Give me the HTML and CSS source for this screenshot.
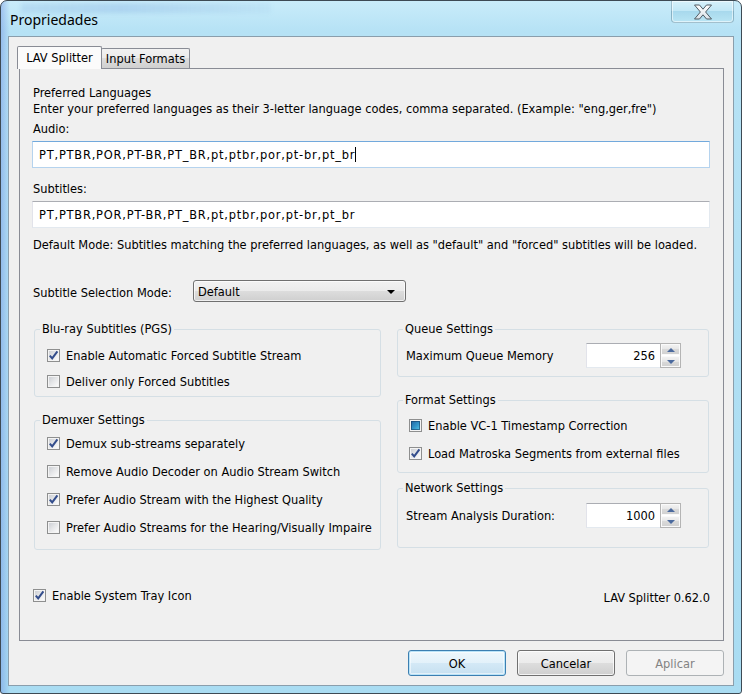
FILE: index.html
```html
<!DOCTYPE html>
<html lang="pt">
<head>
<meta charset="UTF-8">
<title>Propriedades</title>
<link rel="stylesheet" href="styles.css">
</head>
<body>
<div class="window">
    <div class="titlebar">
        <!-- brilho da janela de tras, visto atraves do vidro -->
        <div class="glow"></div>
        <span class="title">Propriedades</span>
        <div class="close">
            <svg width="20" height="16" viewBox="0 0 20 16">
                <defs>
                    <linearGradient id="xg" x1="0" y1="0" x2="0" y2="1">
                        <stop offset="0" stop-color="#ffffff"/>
                        <stop offset="1" stop-color="#d9e2e8"/>
                    </linearGradient>
                </defs>
                <polygon points="1.5,1 6.5,1 10,5.2 13.5,1 18.5,1 12.6,8 18.5,15 13.5,15 10,10.8 6.5,15 1.5,15 7.4,8" fill="url(#xg)" stroke="#4f5b63" stroke-width="1" stroke-linejoin="round"/>
            </svg>
        </div>
    </div>

    <div class="client">
        <div class="tabs">
            <div class="tab active">LAV Splitter</div>
            <div class="tab">Input Formats</div>
        </div>

        <div class="panel">
            <p>Preferred Languages</p>
            <p>Enter your preferred languages as their 3-letter language codes, comma separated. (Example: "eng,ger,fre")</p>
            <p class="field-label">Audio:</p>
            <div class="textbox focused">PT,PTBR,POR,PT-BR,PT_BR,pt,ptbr,por,pt-br,pt_br<span class="caret"></span></div>
            <p class="field-label gap">Subtitles:</p>
            <div class="textbox">PT,PTBR,POR,PT-BR,PT_BR,pt,ptbr,por,pt-br,pt_br</div>
            <p class="note">Default Mode: Subtitles matching the preferred languages, as well as "default" and "forced" subtitles will be loaded.</p>

            <div class="mode-row">
                <span class="mode-label">Subtitle Selection Mode:</span>
                <div class="select"><span>Default</span><span class="arrow"></span></div>
            </div>

            <div class="columns">
                <div class="col-left">
                    <fieldset class="group">
                        <legend>Blu-ray Subtitles (PGS)</legend>
                        <div class="group-body pgs">
                            <div class="check-row"><span class="cb checked"></span>Enable Automatic Forced Subtitle Stream</div>
                            <div class="check-row"><span class="cb"></span>Deliver only Forced Subtitles</div>
                        </div>
                    </fieldset>
                    <fieldset class="group demux">
                        <legend>Demuxer Settings</legend>
                        <div class="group-body">
                            <div class="check-row"><span class="cb checked"></span>Demux sub-streams separately</div>
                            <div class="check-row"><span class="cb"></span>Remove Audio Decoder on Audio Stream Switch</div>
                            <div class="check-row"><span class="cb checked"></span>Prefer Audio Stream with the Highest Quality</div>
                            <div class="check-row"><span class="cb"></span>Prefer Audio Streams for the Hearing/Visually Impaire</div>
                        </div>
                    </fieldset>
                </div>

                <div class="col-right">
                    <fieldset class="group">
                        <legend>Queue Settings</legend>
                        <div class="group-body queue">
                            <div class="field-row">
                                <span class="field-name">Maximum Queue Memory</span>
                                <div class="spin">
                                    <div class="spin-input">256</div>
                                    <div class="spin-btns"><span class="up"></span><span class="down"></span></div>
                                </div>
                            </div>
                        </div>
                    </fieldset>
                    <fieldset class="group format">
                        <legend>Format Settings</legend>
                        <div class="group-body formats">
                            <div class="check-row"><span class="cb mixed"></span>Enable VC-1 Timestamp Correction</div>
                            <div class="check-row"><span class="cb checked"></span>Load Matroska Segments from external files</div>
                        </div>
                    </fieldset>
                    <fieldset class="group network">
                        <legend>Network Settings</legend>
                        <div class="group-body net">
                            <div class="field-row">
                                <span class="field-name">Stream Analysis Duration:</span>
                                <div class="spin">
                                    <div class="spin-input">1000</div>
                                    <div class="spin-btns"><span class="up"></span><span class="down"></span></div>
                                </div>
                            </div>
                        </div>
                    </fieldset>
                </div>
            </div>

            <div class="footer">
                <div class="check-row"><span class="cb checked"></span>Enable System Tray Icon</div>
                <span class="version">LAV Splitter 0.62.0</span>
            </div>
        </div>

        <div class="buttons">
            <button class="btn default">OK</button>
            <button class="btn">Cancelar</button>
            <button class="btn" disabled>Aplicar</button>
        </div>
    </div>
</div>
</body>
</html>
```

FILE: styles.css
```css
body {
    margin: 0;
    font-family: "DejaVu Sans Condensed", "DejaVu Sans", sans-serif;
    font-size: 12.7px;
    color: #000;
    background: #fff;
}
p {
    margin: 0;
    line-height: 16px;
}

/* moldura aero */
.window {
    width: 742px;
    height: 694px;
    box-sizing: border-box;
    border: 1px solid #3d4a54;
    border-radius: 7px 7px 3px 3px;
    background: linear-gradient(90deg, rgba(90, 120, 220, 0.35) 0, rgba(90, 120, 220, 0) 9px),
                linear-gradient(180deg, #c9ecfa 0%, #b6e2f5 30px, #a9dcf2 100%);
    display: flex;
    flex-direction: column;
    overflow: hidden;
}
.titlebar {
    height: 35px;
    display: flex;
    justify-content: space-between;
    align-items: flex-start;
    position: relative;
}
.glow {
    position: absolute;
    top: 2px;
    left: 20px;
    width: 250px;
    height: 10px;
    background: linear-gradient(90deg, rgba(70, 120, 200, 0.12), rgba(70, 120, 200, 0.18) 40%, rgba(70, 120, 200, 0.05));
    filter: blur(2px);
}
.title {
    position: relative;
    margin: 9px 0 0 9px;
    font-family: "Noto Sans", sans-serif;
    font-size: 14px;
    line-height: 20px;
}
.close {
    width: 63px;
    height: 22px;
    margin-right: 7px;
    box-sizing: border-box;
    border: 1px solid rgba(70, 100, 120, 0.35);
    border-top: none;
    border-radius: 0 0 4px 4px;
    background: linear-gradient(180deg, #d6f1fb 0%, #c0e7f6 50%, #a8d9ed 50%, #b9e5f4 100%);
    box-shadow: inset 0 0 0 1px rgba(255, 255, 255, 0.55);
    display: flex;
    align-items: center;
    justify-content: center;
    position: relative;
}

.client {
    margin: 0 7px;
    height: 650px;
    box-sizing: border-box;
    border: 1px solid #8a9eac;
    background: #f0f0f0;
    display: flex;
    flex-direction: column;
}

/* abas */
.tabs {
    display: flex;
    align-items: flex-end;
    height: 22px;
    margin: 9px 0 0 8px;
}
.tab {
    height: 20px;
    width: 89px;
    box-sizing: border-box;
    border: 1px solid #898c95;
    border-bottom: none;
    margin-left: -1px;
    background: linear-gradient(180deg, #f2f2f2 0%, #ebebeb 50%, #dddddd 50%, #cfcfcf 100%);
    text-align: center;
    line-height: 19px;
    border-radius: 2px 2px 0 0;
}
.tab.active {
    height: 23px;
    width: 85px;
    margin-left: 0;
    margin-bottom: -1px;
    background: #fbfbfb;
    line-height: 21px;
    position: relative;
    z-index: 1;
}

.panel {
    margin-left: 10px;
    width: 705px;
    height: 573px;
    box-sizing: border-box;
    border: 1px solid #898c95;
    background: #f0f0f0;
    padding: 16px 13px 0;
    display: flex;
    flex-direction: column;
}
.field-label {
    margin-top: 4px;
}
.field-label.gap {
    margin-top: 13px;
}
.textbox {
    margin: 4px 0 0 -1px;
    width: 678px;
    height: 27px;
    box-sizing: border-box;
    border: 1px solid;
    border-color: #abadb3 #e3e9ef #e3e9ef #e2e3ea;
    background: #fff;
    padding: 0 6px;
    line-height: 25px;
    letter-spacing: 0.8px;
    white-space: nowrap;
}
.textbox.focused {
    border-color: #72a9dc #b5d3ee #b5d3ee #b5d3ee;
}
.caret {
    display: inline-block;
    width: 1px;
    height: 15px;
    background: #000;
    vertical-align: -3px;
}
.note {
    margin-top: 9px;
}

.mode-row {
    display: flex;
    align-items: center;
    margin-top: 27px;
}
.mode-label {
    width: 160px;
    padding-top: 4px;
    line-height: 16px;
}
.select {
    width: 213px;
    height: 22px;
    box-sizing: border-box;
    border: 1px solid #707070;
    border-radius: 3px;
    background: linear-gradient(180deg, #f2f2f2 0%, #ebebeb 50%, #dddddd 50%, #cfcfcf 100%);
    box-shadow: inset 0 0 0 1px rgba(255, 255, 255, 0.7);
    padding: 0 10px 0 4px;
    line-height: 19px;
    display: flex;
    justify-content: space-between;
    align-items: center;
}
.arrow {
    width: 0;
    height: 0;
    border-left: 4px solid transparent;
    border-right: 4px solid transparent;
    border-top: 4px solid #000;
    margin-top: 1px;
}

/* grupos */
.columns {
    display: flex;
    gap: 16px;
    margin: 19px 0 0 1px;
}
.col-left {
    width: 347px;
}
.col-right {
    width: 312px;
}
.group {
    margin: 0;
    padding: 0;
    border: 1px solid #d5dfe5;
    border-radius: 3px;
    min-width: 0;
}
.group legend {
    padding: 0 2px;
    margin-left: 5px;
    line-height: 16px;
}
.group-body {
    display: flex;
    flex-direction: column;
    gap: 8px;
    padding: 5px 0 12px 12px;
}
.group-body.pgs {
    gap: 6px;
    padding: 8px 0 5px 12px;
}
.demux, .format {
    margin-top: 15px;
}
.network {
    margin-top: 7px;
}
.group-body.queue {
    padding: 6px 0 8px 8px;
}
.group-body.formats {
    padding: 7px 0 9px 11px;
}
.group-body.net {
    padding: 7px 0 19px 8px;
}

.check-row {
    display: flex;
    align-items: center;
    height: 20px;
    white-space: nowrap;
}
.cb {
    width: 13px;
    height: 13px;
    box-sizing: border-box;
    border: 1px solid #8e8f8f;
    background: #f4f4f4;
    margin-right: 6px;
    position: relative;
    flex: none;
}
.cb::before {
    content: "";
    position: absolute;
    inset: 1px;
    background: linear-gradient(135deg, #cdd0d5 0%, #e6e7e9 50%, #fbfbfb 100%);
}
.cb.checked::after {
    content: "";
    position: absolute;
    inset: 0;
    background: url("data:image/svg+xml,%3Csvg xmlns='http://www.w3.org/2000/svg' width='11' height='11' viewBox='0 0 11 11'%3E%3Cpath d='M1.8 5.6 L4.2 8.4 L9.4 1.4' fill='none' stroke='%23334d8c' stroke-width='2'/%3E%3C/svg%3E") no-repeat center;
}
.cb.mixed::before {
    inset: 1px;
    background: linear-gradient(135deg, #1f62a0 0%, #3294c9 55%, #58c8e8 100%);
    box-shadow: inset 0 0 0 1px rgba(20, 60, 100, 0.6);
}

.field-row {
    display: flex;
    align-items: center;
    height: 25px;
}
.field-name {
    width: 180px;
}
.spin {
    display: flex;
    height: 25px;
}
.spin-input {
    width: 74px;
    box-sizing: border-box;
    border: 1px solid;
    border-color: #abadb3 #e3e9ef #e3e9ef #e2e3ea;
    border-right: none;
    background: #fff;
    text-align: right;
    padding-right: 5px;
    line-height: 23px;
}
.spin-btns {
    width: 21px;
    display: flex;
    flex-direction: column;
    gap: 1px;
    box-sizing: border-box;
    border: 1px solid #b4b4b4;
    background: #fff;
}
.spin-btns span {
    flex: 1;
    background: linear-gradient(180deg, #f4f4f4 0%, #e6e6e6 50%, #d9d9d9 50%, #d0d0d0 100%);
    box-shadow: inset 0 0 0 1px #fafafa;
    position: relative;
}
.spin-btns span::after {
    content: "";
    position: absolute;
    left: 6px;
    top: 4px;
    border-left: 4px solid transparent;
    border-right: 4px solid transparent;
}
.spin-btns .up::after {
    border-bottom: 4px solid #4b6a9e;
}
.spin-btns .down::after {
    border-top: 4px solid #4b6a9e;
}

.footer {
    margin: auto 0 34px;
    display: flex;
    justify-content: space-between;
    align-items: flex-start;
}
.version {
    padding-top: 5px;
    line-height: 16px;
}

/* botoes */
.buttons {
    display: flex;
    justify-content: flex-end;
    gap: 11px;
    margin-top: 9px;
    padding-right: 9px;
}
.btn {
    width: 98px;
    height: 26px;
    font-family: inherit;
    font-size: 12.7px;
    color: #000;
    border: 1px solid #707070;
    border-radius: 3px;
    background: linear-gradient(180deg, #f2f2f2 0%, #ebebeb 50%, #dddddd 50%, #cfcfcf 100%);
    box-shadow: inset 0 0 0 1px rgba(255, 255, 255, 0.75);
    padding: 0;
}
.btn.default {
    border-color: #3c7fb1;
    box-shadow: inset 0 0 0 1px #b9e3f8, inset 0 0 0 2px rgba(255, 255, 255, 0.5);
    background: linear-gradient(180deg, #eef7fc 0%, #e3f1fa 50%, #d4e9f6 50%, #c6e0f0 100%);
}
.btn:disabled {
    border-color: #adb2b5;
    background: #f4f4f4;
    box-shadow: none;
    color: #838383;
}
```
